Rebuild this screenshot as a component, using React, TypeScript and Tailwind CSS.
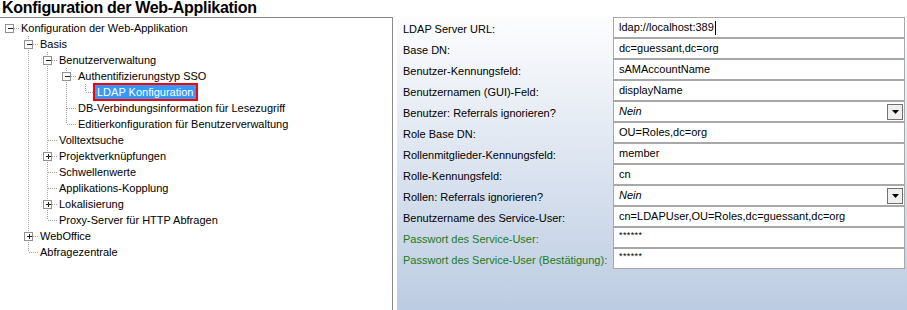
import React from "react";

type Node = {
  label: string;
  level: number;
  last: boolean;
  kids?: "open" | "closed";
  selected?: boolean;
};

const TREE: Node[] = [
  { label: "Konfiguration der Web-Applikation", level: 0, last: true, kids: "open" },
  { label: "Basis", level: 1, last: false, kids: "open" },
  { label: "Benutzerverwaltung", level: 2, last: false, kids: "open" },
  { label: "Authentifizierungstyp SSO", level: 3, last: false, kids: "open" },
  { label: "LDAP Konfiguration", level: 4, last: true, selected: true },
  { label: "DB-Verbindungsinformation für Lesezugriff", level: 3, last: false },
  { label: "Editierkonfiguration für Benutzerverwaltung", level: 3, last: true },
  { label: "Volltextsuche", level: 2, last: false },
  { label: "Projektverknüpfungen", level: 2, last: false, kids: "closed" },
  { label: "Schwellenwerte", level: 2, last: false },
  { label: "Applikations-Kopplung", level: 2, last: false },
  { label: "Lokalisierung", level: 2, last: false, kids: "closed" },
  { label: "Proxy-Server für HTTP Abfragen", level: 2, last: true },
  { label: "WebOffice", level: 1, last: false, kids: "closed" },
  { label: "Abfragezentrale", level: 1, last: true },
];

type Field = {
  label: string;
  value: string;
  green?: boolean;
  combo?: boolean;
  caret?: boolean;
};

const FIELDS: Field[] = [
  { label: "LDAP Server URL:", value: "ldap://localhost:389", caret: true },
  { label: "Base DN:", value: "dc=guessant,dc=org" },
  { label: "Benutzer-Kennungsfeld:", value: "sAMAccountName" },
  { label: "Benutzernamen (GUI)-Feld:", value: "displayName" },
  { label: "Benutzer: Referrals ignorieren?", value: "Nein", combo: true },
  { label: "Role Base DN:", value: "OU=Roles,dc=org" },
  { label: "Rollenmitglieder-Kennungsfeld:", value: "member" },
  { label: "Rolle-Kennungsfeld:", value: "cn" },
  { label: "Rollen: Referrals ignorieren?", value: "Nein", combo: true },
  { label: "Benutzername des Service-User:", value: "cn=LDAPUser,OU=Roles,dc=guessant,dc=org" },
  { label: "Passwort des Service-User:", value: "******", green: true },
  { label: "Passwort des Service-User (Bestätigung):", value: "******", green: true },
];

const IND = 19;
const DOT = "#a0a0a0";

function Connectors({ node, open }: { node: Node; open: boolean[] }) {
  const L = node.level;
  const w = IND * (L + 1);
  const lines: React.ReactNode[] = [];
  for (let i = 1; i < L; i++) {
    if (open[i]) {
      const x = IND * i + 9.5;
      lines.push(<line key={"v" + i} x1={x} y1={0} x2={x} y2={16} />);
    }
  }
  const cx = IND * L + 9.5;
  if (L > 0) {
    lines.push(<line key="up" x1={cx} y1={0} x2={cx} y2={node.last ? 8 : 16} />);
  }
  lines.push(<line key="h" x1={cx} y1={8.5} x2={w} y2={8.5} />);
  return (
    <svg width={w} height={16} className="shrink-0" shapeRendering="crispEdges">
      <g stroke={DOT} strokeWidth={1} strokeDasharray="1 1">
        {lines}
      </g>
      {node.kids && (
        <g>
          <rect x={cx - 4} y={4.5} width={8} height={8} fill="#fff" stroke="#919191" />
          <line x1={cx - 2} y1={8.5} x2={cx + 3} y2={8.5} stroke="#1f1f1f" />
          {node.kids === "closed" && (
            <line x1={cx + 0.5} y1={6} x2={cx + 0.5} y2={11} stroke="#1f1f1f" />
          )}
        </g>
      )}
    </svg>
  );
}

function Tree() {
  const open: boolean[] = [];
  return (
    <div className="pt-[2px]">
      {TREE.map((n) => {
        open[n.level] = !n.last;
        const snap = open.slice();
        return (
          <div key={n.label} className="flex items-center h-[16px]">
            <Connectors node={n} open={snap} />
            {n.selected ? (
              <span className="ml-[-2px] h-[18px] -my-[1px] flex items-center border-2 border-[#ff0000] bg-[#3399ff] text-white pl-[2px] pr-[3px] whitespace-nowrap">
                {n.label}
              </span>
            ) : (
              <span className="ml-[2px] whitespace-nowrap text-black">{n.label}</span>
            )}
          </div>
        );
      })}
    </div>
  );
}

function ComboButton() {
  return (
    <div className="w-[16px] h-[16px] mr-[1px] border border-[#707070] bg-[#efefef] flex items-center justify-center shrink-0">
      <svg width="7" height="4" viewBox="0 0 7 4">
        <path d="M0 0h7L3.5 4z" fill="#000" />
      </svg>
    </div>
  );
}

export default function App() {
  return (
    <div
      className="w-[907px] h-[310px] overflow-hidden bg-white flex flex-col text-[11px] text-black"
      style={{ fontFamily: '"Liberation Sans", Arial, sans-serif' }}
    >
      <div className="h-[17px] pl-[2px] text-[16px] font-bold leading-[16px] tracking-[-0.3px]">
        Konfiguration der Web-Applikation
      </div>
      <div className="flex flex-1 min-h-0">
        <div className="w-[393px] shrink-0 border-t border-r border-[#8a8a8a] text-[11px]">
          <Tree />
        </div>
        <div className="ml-[4px] flex-1 bg-gradient-to-b from-[#fdfdfe] to-[#bccce2] flex text-[11px]">
          <div className="w-[216px] shrink-0 pl-[6px]">
            {FIELDS.map((f) => (
              <div
                key={f.label}
                className={`h-[21px] flex items-center pt-[3px] whitespace-nowrap ${f.green ? "text-[#217a21]" : "text-black"}`}
              >
                {f.label}
              </div>
            ))}
          </div>
          <div className="w-[292px] shrink-0">
            {FIELDS.map((f) => (
              <div
                key={f.label}
                className="h-[21px] border border-[#a8a8a8] bg-white flex items-center pl-[5px]"
              >
                {f.combo ? (
                  <>
                    <span className="italic flex-1">{f.value}</span>
                    <ComboButton />
                  </>
                ) : f.green ? (
                  <span className="text-[9px] leading-none tracking-[0.4px] -mt-[4px]">{f.value}</span>
                ) : (
                  <span className="flex items-center">
                    {f.value}
                    {f.caret && <span className="inline-block w-[1px] h-[14px] bg-black ml-[1px]" />}
                  </span>
                )}
              </div>
            ))}
          </div>
        </div>
      </div>
    </div>
  );
}
